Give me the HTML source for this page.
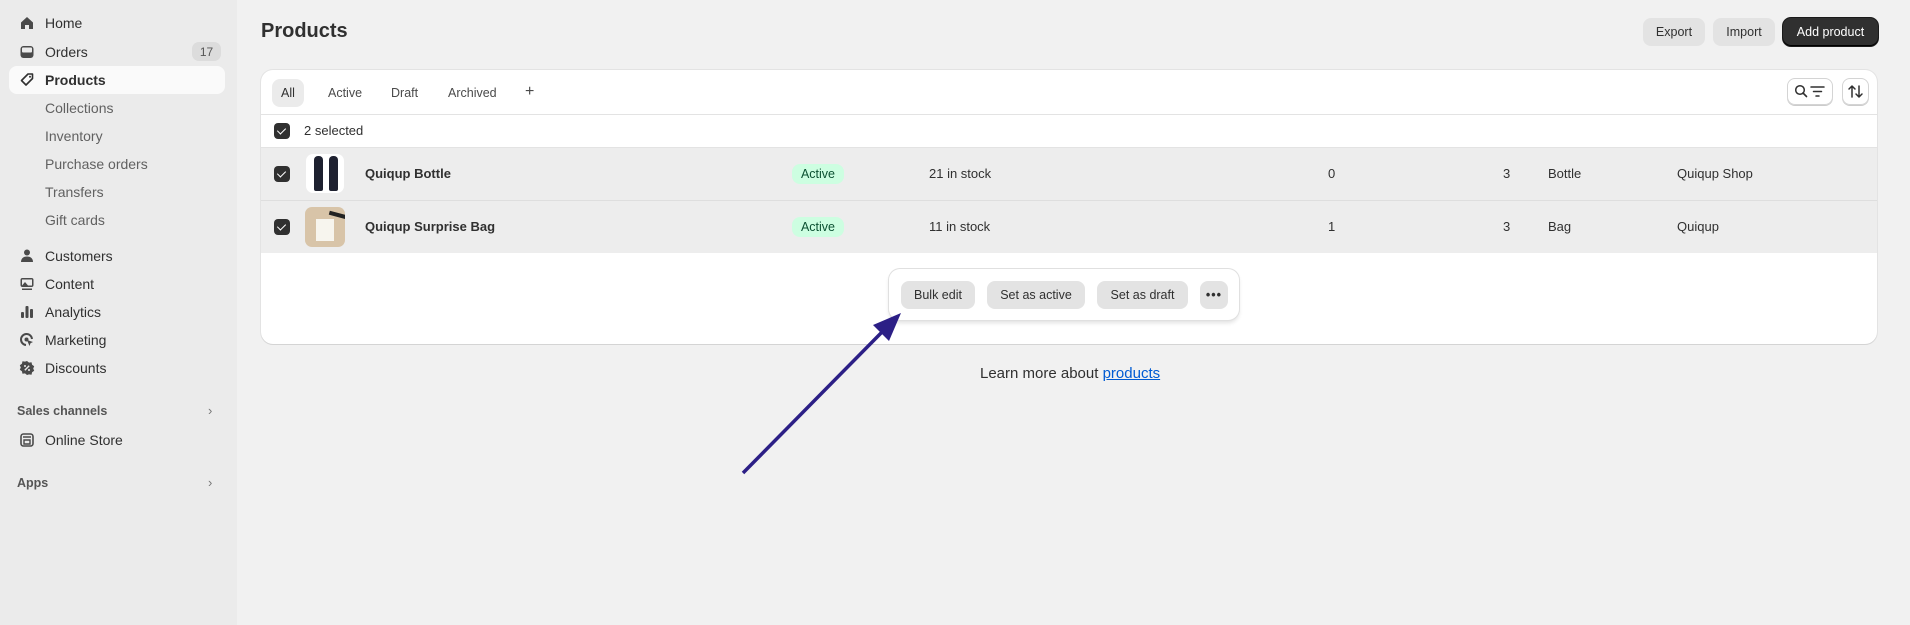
<!DOCTYPE html>
<html><head><meta charset="utf-8"><style>
*{box-sizing:border-box;margin:0;padding:0}
body{width:1910px;height:625px;background:#f1f1f1;font-family:"Liberation Sans",sans-serif;color:#303030;position:relative;overflow:hidden;font-size:14px}
.a{position:absolute}
.side{left:0;top:0;width:237px;height:625px;background:#ebebeb}
.nav{position:absolute;left:45px;font-size:14px;color:#303030;line-height:20px;transform:translateY(-50%)}
.sub{color:#616161}
.ic{position:absolute;left:19px;width:16px;height:16px;transform:translateY(-50%)}
.btn{position:absolute;background:#e3e3e3;border-radius:8px;font-size:12.5px;color:#303030;display:flex;align-items:center;justify-content:center}
.card{left:261px;top:70px;width:1616px;height:274px;background:#fff;border-radius:12px;box-shadow:0 1px 0 #d4d4d4,0 0 0 1px #e3e3e3;overflow:hidden}
.cb{position:absolute;width:16px;height:16px;background:#303030;border-radius:4px;transform:translateY(-50%)}
.cb::after{content:"";position:absolute;left:5px;top:3px;width:4px;height:7px;border:solid #fff;border-width:0 1.8px 1.8px 0;transform:rotate(45deg)}
.t{position:absolute;transform:translateY(-50%);font-size:13px;white-space:nowrap;line-height:16px}
.badge{position:absolute;background:#cdfee1;color:#0c5132;border-radius:8px;font-size:12.5px;width:52px;height:20px;line-height:20px;text-align:center;transform:translateY(-50%)}
</style></head><body>
<div class="a side"></div>
<div class="a" style="left:9px;top:66px;width:216px;height:28px;background:#fafafa;border-radius:8px"></div>
<svg class="ic" style="top:23px" viewBox="0 0 16 16"><path d="M2 7.5 8 2l6 5.5V14H10V10H6v4H2z" fill="#4a4a4a"/></svg>
<div class="nav" style="top:23px">Home</div>
<svg class="ic" style="top:52px" viewBox="0 0 16 16"><rect x="1.5" y="2" width="13" height="12" rx="3" fill="#4a4a4a"/><rect x="3" y="3.5" width="10" height="5" rx="1" fill="#ebebeb"/></svg>
<div class="nav" style="top:52px">Orders</div>
<div class="a" style="left:192px;top:42px;width:29px;height:19px;background:#dcdcdc;border-radius:7px;font-size:12px;color:#555;display:flex;align-items:center;justify-content:center">17</div>
<svg class="ic" style="top:80px" viewBox="0 0 16 16"><path d="M9 2h4.5v4.5L7 13 2.5 8.5z" fill="none" stroke="#303030" stroke-width="1.6" stroke-linejoin="round"/><circle cx="11" cy="4.8" r="1" fill="#303030"/></svg>
<div class="nav" style="top:80px;font-weight:bold">Products</div>
<div class="nav sub" style="top:108px">Collections</div>
<div class="nav sub" style="top:136px">Inventory</div>
<div class="nav sub" style="top:164px">Purchase orders</div>
<div class="nav sub" style="top:192px">Transfers</div>
<div class="nav sub" style="top:220px">Gift cards</div>
<svg class="ic" style="top:256px" viewBox="0 0 16 16"><circle cx="8" cy="4.5" r="3" fill="#4a4a4a"/><path d="M2 14c0-4 3-5.5 6-5.5s6 1.5 6 5.5z" fill="#4a4a4a"/></svg>
<div class="nav" style="top:256px">Customers</div>
<svg class="ic" style="top:284px" viewBox="0 0 16 16"><rect x="1.5" y="2" width="13" height="9" rx="2" fill="#4a4a4a"/><rect x="3" y="3.5" width="10" height="6" fill="#ebebeb"/><path d="M3 9.5 6 6l3 3.5z" fill="#4a4a4a"/><rect x="3" y="12.5" width="10" height="1.5" fill="#4a4a4a"/></svg>
<div class="nav" style="top:284px">Content</div>
<svg class="ic" style="top:312px" viewBox="0 0 16 16"><rect x="2" y="8" width="3" height="6" rx="1" fill="#4a4a4a"/><rect x="6.5" y="2" width="3" height="12" rx="1" fill="#4a4a4a"/><rect x="11" y="5" width="3" height="9" rx="1" fill="#4a4a4a"/></svg>
<div class="nav" style="top:312px">Analytics</div>
<svg class="ic" style="top:340px" viewBox="0 0 16 16"><path d="M13 7A5.5 5.5 0 1 0 7 13" fill="none" stroke="#4a4a4a" stroke-width="2"/><circle cx="7.5" cy="7.5" r="2" fill="#4a4a4a"/><path d="M8 8l6 2-2.5 1.2L10.5 14z" fill="#4a4a4a"/></svg>
<div class="nav" style="top:340px">Marketing</div>
<svg class="ic" style="top:368px" viewBox="0 0 16 16"><path d="M8 1l2 1.6 2.5-.3.6 2.5 2.1 1.4-1 2.3 1 2.3-2.1 1.4-.6 2.5-2.5-.3L8 15l-2-1.6-2.5.3-.6-2.5L.8 9.8l1-2.3-1-2.3 2.1-1.4.6-2.5 2.5.3z" fill="#4a4a4a"/><path d="M5.8 10.2l4.4-4.4" stroke="#ebebeb" stroke-width="1.4"/><circle cx="6" cy="6" r="1" fill="#ebebeb"/><circle cx="10" cy="10" r="1" fill="#ebebeb"/></svg>
<div class="nav" style="top:368px">Discounts</div>
<div class="nav" style="top:411px;left:17px;font-size:12.5px;font-weight:bold;color:#555">Sales channels</div>
<div class="nav" style="top:411px;left:208px;font-size:13px;color:#777">›</div>
<svg class="ic" style="top:440px" viewBox="0 0 16 16"><rect x="2" y="2" width="12" height="12" rx="2.5" fill="none" stroke="#4a4a4a" stroke-width="1.6"/><path d="M4 5h8M5 8h6v4H5z" fill="none" stroke="#4a4a4a" stroke-width="1.4"/></svg>
<div class="nav" style="top:440px">Online Store</div>
<div class="nav" style="top:483px;left:17px;font-size:12.5px;font-weight:bold;color:#555">Apps</div>
<div class="nav" style="top:483px;left:208px;font-size:13px;color:#777">›</div>

<div class="a" style="left:261px;top:20px;font-size:20px;font-weight:bold;color:#303030">Products</div>
<div class="btn" style="left:1643px;top:18px;width:62px;height:28px">Export</div>
<div class="btn" style="left:1713px;top:18px;width:62px;height:28px">Import</div>
<div class="btn" style="left:1783px;top:18px;width:95px;height:28px;background:#303030;color:#fff;box-shadow:inset 0 -1px 0 #000,0 0 0 1px #1a1a1a">Add product</div>

<div class="a card">
  <div class="btn" style="left:11px;top:9px;width:32px;height:28px;background:#ebebeb">All</div>
  <div class="t" style="left:67px;top:23px;color:#4a4a4a;font-size:12.5px">Active</div>
  <div class="t" style="left:130px;top:23px;color:#4a4a4a;font-size:12.5px">Draft</div>
  <div class="t" style="left:187px;top:23px;color:#4a4a4a;font-size:12.5px">Archived</div>
  <div class="t" style="left:264px;top:22px;color:#4a4a4a;font-size:16px">+</div>
  <div class="a" style="left:1526px;top:8px;width:46px;height:27px;border:1px solid #d4d4d4;border-radius:8px;box-shadow:0 1px 0 #ccc"></div>
  <svg class="a" style="left:1533px;top:14px" width="34" height="15" viewBox="0 0 34 15"><circle cx="6" cy="6" r="4.3" fill="none" stroke="#303030" stroke-width="1.5"/><path d="M9 9l3.5 3.5" stroke="#303030" stroke-width="1.6" stroke-linecap="round"/><path d="M17 3h13M19.5 7.5h8M22 12h3" stroke="#303030" stroke-width="1.5" stroke-linecap="round"/></svg>
  <div class="a" style="left:1581px;top:8px;width:27px;height:27px;border:1px solid #d4d4d4;border-radius:8px;box-shadow:0 1px 0 #ccc"></div>
  <svg class="a" style="left:1586px;top:14px" width="17" height="15" viewBox="0 0 17 15"><path d="M5 13V2M2 5l3-3 3 3M12 2v11M9 10l3 3 3-3" fill="none" stroke="#303030" stroke-width="1.5" stroke-linecap="round" stroke-linejoin="round"/></svg>
  <div class="a" style="left:0;top:44px;width:100%;height:1px;background:#e3e3e3"></div>
  <div class="cb" style="left:13px;top:61px"></div>
  <div class="t" style="left:43px;top:61px;font-size:13px">2 selected</div>
  <div class="a" style="left:0;top:77px;width:100%;height:53px;background:#ededed;border-top:1px solid #e3e3e3"></div>
  <div class="a" style="left:0;top:130px;width:100%;height:53px;background:#ededed;border-top:1px solid #dedede"></div>
  <div class="cb" style="left:13px;top:104px"></div>
  <div class="a" style="left:45px;top:84px;width:38px;height:39px;background:#fff;border-radius:7px"></div>
  <div class="a" style="left:53px;top:86px;width:9px;height:35px;background:#1e2130;border-radius:4px 4px 2px 2px"></div>
  <div class="a" style="left:68px;top:86px;width:9px;height:35px;background:#1e2130;border-radius:4px 4px 2px 2px"></div>
  <div class="t" style="left:104px;top:104px;font-weight:bold;font-size:13px">Quiqup Bottle</div>
  <div class="badge" style="left:531px;top:104px">Active</div>
  <div class="t" style="left:668px;top:104px">21 in stock</div>
  <div class="t" style="left:1067px;top:104px">0</div>
  <div class="t" style="left:1242px;top:104px">3</div>
  <div class="t" style="left:1287px;top:104px">Bottle</div>
  <div class="t" style="left:1416px;top:104px">Quiqup Shop</div>
  <div class="cb" style="left:13px;top:157px"></div>
  <div class="a" style="left:44px;top:137px;width:40px;height:40px;background:#d8c4a8;border-radius:7px;overflow:hidden"><div class="a" style="left:11px;top:12px;width:18px;height:22px;background:#f7f5ee"></div><div class="a" style="left:24px;top:6px;width:18px;height:4px;background:#222;transform:rotate(15deg)"></div></div>
  <div class="t" style="left:104px;top:157px;font-weight:bold;font-size:13px">Quiqup Surprise Bag</div>
  <div class="badge" style="left:531px;top:157px">Active</div>
  <div class="t" style="left:668px;top:157px">11 in stock</div>
  <div class="t" style="left:1067px;top:157px">1</div>
  <div class="t" style="left:1242px;top:157px">3</div>
  <div class="t" style="left:1287px;top:157px">Bag</div>
  <div class="t" style="left:1416px;top:157px">Quiqup</div>
  <div class="a" style="left:628px;top:199px;width:350px;height:51px;background:#fff;border-radius:11px;box-shadow:0 0 0 1px #e0e0e0,0 3px 4px rgba(0,0,0,.12)"></div>
  <div class="btn" style="left:640px;top:211px;width:74px;height:28px">Bulk edit</div>
  <div class="btn" style="left:726px;top:211px;width:98px;height:28px">Set as active</div>
  <div class="btn" style="left:836px;top:211px;width:91px;height:28px">Set as draft</div>
  <div class="btn" style="left:939px;top:211px;width:28px;height:28px;font-weight:bold;letter-spacing:1px">•••</div>
</div>

<div class="a" style="left:980px;top:365px;font-size:15px;color:#303030">Learn more about <span style="color:#005bd3;text-decoration:underline">products</span></div>

<svg class="a" style="left:0;top:0" width="1910" height="625"><path d="M743 473 885 329" stroke="#2c1f86" stroke-width="3.5"/><path d="M901 313 873 325 889 341z" fill="#2c1f86"/></svg>
</body></html>
